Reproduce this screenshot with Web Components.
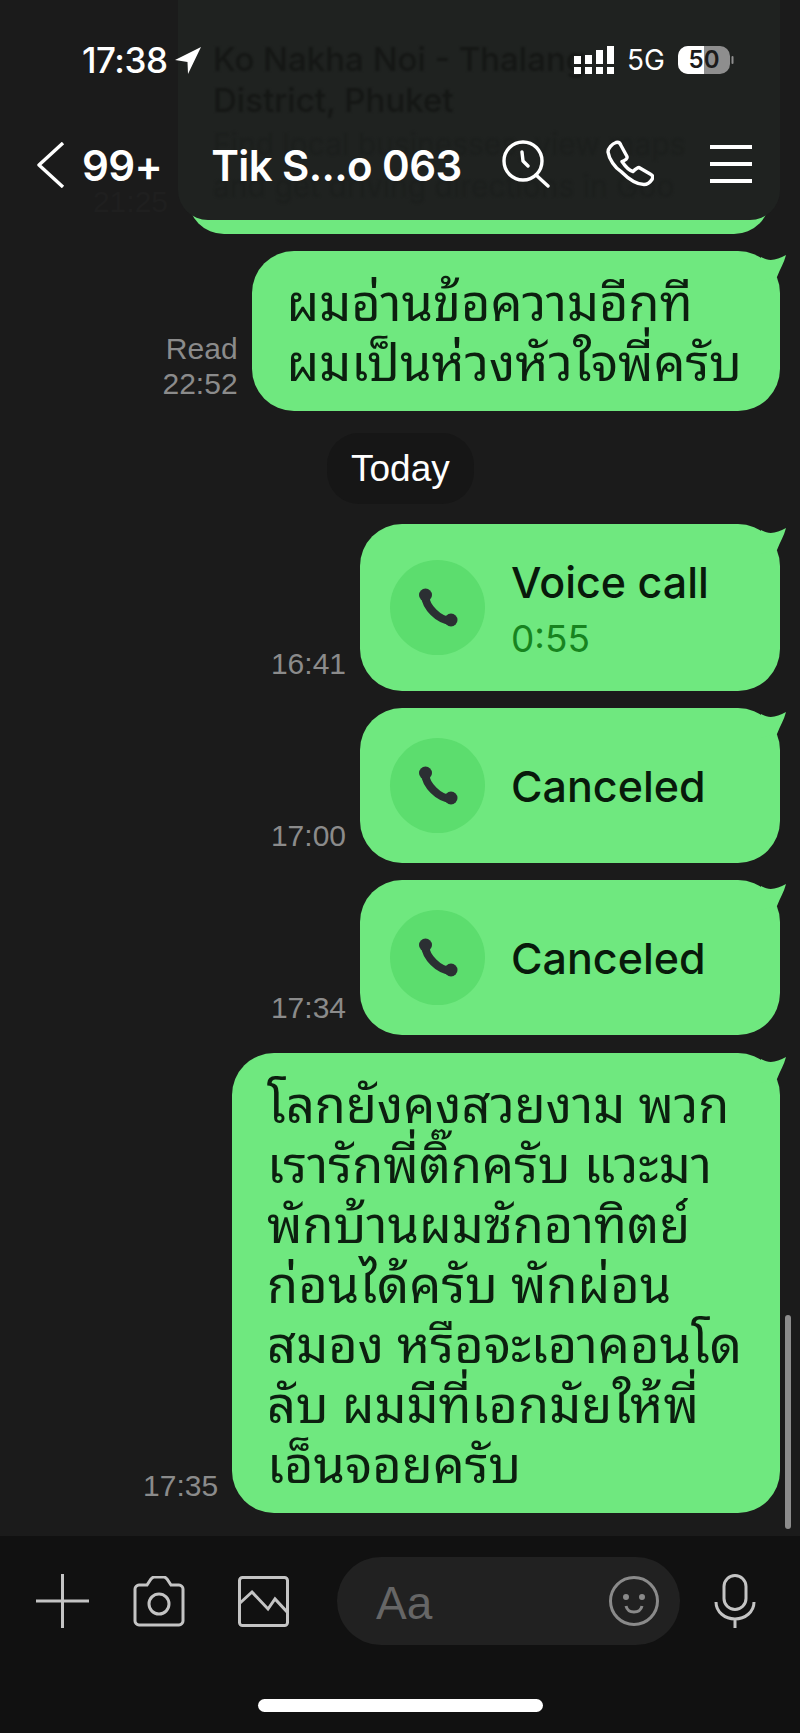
<!DOCTYPE html>
<html>
<head>
<meta charset="utf-8">
<title>Chat</title>
<style>
  html, body { margin: 0; background: #1b1b1b; }
</style>
</head>
<body>
<chat-screen>
  <status-bar slot="overlay"></status-bar>
  <chat-nav slot="overlay" count="99+" name="Tik S...o 063"></chat-nav>

  <msg-row><link-card></link-card><msg-meta slot="meta" style="color:#1f1f1f;padding:0 6px 15px 0">21:25</msg-meta></msg-row>
  <msg-row><text-bubble>ผมอ่านข้อความอีกที<br>ผมเป็นห่วงหัวใจพี่ครับ</text-bubble><msg-meta slot="meta">Read<br>22:52</msg-meta></msg-row>
  <date-pill>Today</date-pill>
  <msg-row><call-bubble title="Voice call" duration="0:55"></call-bubble><msg-meta slot="meta">16:41</msg-meta></msg-row>
  <msg-row><call-bubble title="Canceled"></call-bubble><msg-meta slot="meta">17:00</msg-meta></msg-row>
  <msg-row style="margin-bottom:18px"><call-bubble title="Canceled"></call-bubble><msg-meta slot="meta">17:34</msg-meta></msg-row>
  <msg-row><text-bubble>โลกยังคงสวยงาม พวก<br>เรารักพี่ติ๊กครับ แวะมา<br>พักบ้านผมซักอาทิตย์<br>ก่อนได้ครับ พักผ่อน<br>สมอง หรือจะเอาคอนโด<br>ลับ ผมมีที่เอกมัยให้พี่<br>เอ็นจอยครับ</text-bubble><msg-meta slot="meta">17:35</msg-meta></msg-row>

  <chat-input slot="footer"></chat-input>
</chat-screen>

<script>
const FONT = 'Inter, "Liberation Sans", sans-serif';
const THAI = '"Noto Sans Thai Looped", "Liberation Sans", sans-serif';

/** Page frame: chat column, overlay for the bars, footer for the input */
class ChatScreen extends HTMLElement {
  constructor() {
    super();
    this.attachShadow({ mode: 'open' }).innerHTML = `
      <style>
        :host { display: flex; flex-direction: column; position: relative; width: 800px; height: 1733px; overflow: hidden; background: #1b1b1b; font-family: ${FONT}; }
        .list { flex: 1; display: flex; flex-direction: column; }
        .scroll { position: absolute; left: 785px; top: 1315px; width: 6px; height: 214px; border-radius: 3px; background: #8c8c8c; }
      </style>
      <div class="list"><slot></slot></div>
      <slot name="overlay"></slot>
      <div class="scroll"></div>
      <slot name="footer"></slot>
    `;
  }
}

class StatusBar extends HTMLElement {
  constructor() {
    super();
    this.attachShadow({ mode: 'open' }).innerHTML = `
      <style>
        :host { position: absolute; left: 0; top: 46px; width: 800px; height: 28px; display: flex; align-items: center; color: #fff; }
        .time { margin-left: 82px; font-size: 35px; font-weight: 500; letter-spacing: -.5px; }
        .arrow { margin-left: 8px; }
        .right { margin-left: auto; margin-right: 66px; display: flex; align-items: center; }
        .g { font-size: 28px; font-weight: 400; margin: 0 13px; }
      </style>
      <span class="time">17:38</span>
      <svg class="arrow" width="27" height="27" viewBox="0 0 27 27"><path d="M26 0 0 13l12.500 2 .5 12z" fill="#fff"/></svg>
      <div class="right">
        <svg width="40" height="28" viewBox="0 0 40 28" fill="#fff">
          <rect x="0" y="10" width="7" height="8"/><rect x="0" y="21" width="7" height="7"/>
          <rect x="11" y="9" width="7" height="9"/><rect x="11" y="21" width="7" height="7"/>
          <rect x="22" y="4" width="7" height="14"/><rect x="22" y="21" width="7" height="7"/>
          <rect x="33" y="0" width="7" height="18"/><rect x="33" y="21" width="7" height="7"/>
        </svg>
        <span class="g">5G</span>
        <svg width="56" height="28" viewBox="0 0 56 28">
          <rect x="0" y="0" width="52" height="28" rx="10" fill="#8e8e8e"/>
          <path d="M10 0h16v28H10A10 10 0 0 1 0 18V10A10 10 0 0 1 10 0z" fill="#fff"/>
          <rect x="53.500" y="10" width="2" height="8" rx="1" fill="#8e8e8e"/>
          <text x="26" y="22" text-anchor="middle" font-size="24" font-weight="600" font-family="Inter, sans-serif" fill="#1b1b1b">50</text>
        </svg>
      </div>
    `;
  }
}

class ChatNav extends HTMLElement {
  constructor() {
    super();
    this.attachShadow({ mode: 'open' }).innerHTML = `
      <style>
        :host { position: absolute; left: 0; top: 136px; width: 800px; height: 58px; display: flex; align-items: center; color: #fff; }
        .back { margin-left: 37px; }
        .count { margin-left: 17px; font-size: 42px; font-weight: 600; letter-spacing: -.6px; }
        .name { margin-left: 49px; font-size: 42px; font-weight: 600; letter-spacing: -.6px; white-space: nowrap; }
        .icons { position: absolute; right: 48px; top: 4px; display: flex; align-items: center; }
        svg { display: block; fill: none; stroke: #fff; stroke-width: 3.400; stroke-linecap: round; stroke-linejoin: round; }
      </style>
      <svg class="back" width="28" height="46" viewBox="0 0 28 46"><path d="M26 1 2 23l24 22" stroke-linecap="butt"/></svg>
      <span class="count">${this.getAttribute('count')}</span>
      <span class="name">${this.getAttribute('name')}</span>
      <div class="icons">
        <svg width="48" height="48" viewBox="0 0 48 48"><circle cx="21" cy="21" r="19"/><path d="M20 12l1 9 5 5M34 35l12 11"/></svg>
        <svg style="margin-left:56px" width="48" height="48" viewBox="0 0 48 48"><path d="M2 12C2 8 6 4 10 2.500c2-.5 4 0 5 3l6 11c.5 1.500 0 3-5 5 2 3 7 9 11 10 2-2 4-4 6-4l12 7c2 1 2 3 1 5-2 3-5 5-8 5-8 0-16-6-23-13C9 28 3 19 2 12z"/></svg>
        <svg style="margin-left:56px" width="42" height="40" viewBox="0 0 42 40"><path d="M0 3h42M0 20h42M0 37h42" stroke-width="3.800" stroke-linecap="butt"/></svg>
      </div>
    `;
  }
}

/** Link preview bubble which has scrolled under the nav bar, seen dimmed */
class LinkCard extends HTMLElement {
  constructor() {
    super();
    this.attachShadow({ mode: 'open' }).innerHTML = `
      <style>
        :host { display: block; position: relative; width: 582px; height: 234px; margin-right: 10px; border-radius: 0 0 36px 36px; background: #6fe87f; }
        .veil { position: absolute; left: -10px; right: -10px; top: 0; height: 220px; box-sizing: border-box; padding: 39px 0 0 35px; background: #1f2220; border-radius: 0 0 30px 30px; overflow: hidden; }
        .ghost { color: #151715; font-size: 33px; font-weight: 500; line-height: 41px; white-space: nowrap; filter: blur(1px); }
        .sub { margin-top: 2px; font-size: 30px; font-weight: 400; line-height: 42px; color: #1c1f1d; }
        p { margin: 0; }
      </style>
      <div class="veil">
        <div class="ghost">
          <p>Ko Nakha Noi - Thalang</p>
          <p>District, Phuket</p>
          <p class="sub">Find local businesses, view maps</p>
          <p class="sub" style="margin-top:0">and get driving directions in Goo</p>
        </div>
      </div>
    `;
  }
}

/** Right aligned message row: meta on the left, bubble on the right */
class MsgRow extends HTMLElement {
  constructor() {
    super();
    this.attachShadow({ mode: 'open' }).innerHTML = `
      <style>
        :host { display: flex; justify-content: flex-end; align-items: flex-end; gap: 14px; margin: 0 20px 17px 0; }
        .meta { display: block; order: -1; }
      </style>
      <div class="meta"><slot name="meta"></slot></div>
      <slot></slot>
    `;
  }
}

class MsgMeta extends HTMLElement {
  constructor() {
    super();
    this.attachShadow({ mode: 'open' }).innerHTML = `
      <style>
        :host { display: block; color: #8b8b8b; font-size: 30px; line-height: 35px; text-align: right; font-family: "Liberation Sans", sans-serif; padding-bottom: 10px; }
      </style>
      <slot></slot>
    `;
  }
}

const TAIL = `<svg class="tail" width="26" height="40" viewBox="0 0 26 40"><path d="M0 6c8 5 16 3 25-2-2 8-6 14-9 22L0 30z" fill="#6fe87f"/></svg>`;

class TextBubble extends HTMLElement {
  constructor() {
    super();
    this.attachShadow({ mode: 'open' }).innerHTML = `
      <style>
        :host { display: block; position: relative; box-sizing: border-box; padding: 18px 38px 22px 35px; border-radius: 42px; background: #6fe87f; color: #0c1f0f; font-family: ${THAI}; font-size: 50.500px; line-height: 60px; white-space: nowrap; }
        .tail { position: absolute; right: -7px; top: 0; }
      </style>
      <slot></slot>${TAIL}
    `;
  }
}

class CallBubble extends HTMLElement {
  constructor() {
    super();
    const duration = this.getAttribute('duration');
    this.attachShadow({ mode: 'open' }).innerHTML = `
      <style>
        :host { display: flex; align-items: center; position: relative; box-sizing: border-box; width: 420px; padding: 0 30px; height: ${duration ? 167 : 155}px; border-radius: 42px; background: #6fe87f; color: #081a0b; }
        .tail { position: absolute; right: -7px; top: 0; }
        .circle { width: 95px; height: 95px; flex: none; border-radius: 50%; background: #5cdd6e; display: flex; align-items: center; justify-content: center; margin-right: 26px; }
        .title { font-size: 43px; font-weight: 500; line-height: 50px; }
        .dur { font-size: 37px; color: #17841f; line-height: 40px; margin-top: 12px; }
        svg.phone { display: block; }
      </style>
      <div class="circle">
        <svg class="phone" width="40" height="40" viewBox="0 0 40 40"><path d="M7 8c1 11 13 24 26 25" fill="none" stroke="#2b2f33" stroke-width="8" stroke-linecap="round"/><circle cx="7.500" cy="7" r="6.500" fill="#2b2f33"/><circle cx="33" cy="32" r="6.500" fill="#2b2f33"/></svg>
      </div>
      <div>
        <div class="title">${this.getAttribute('title')}</div>
        ${duration ? `<div class="dur">${duration}</div>` : ''}
      </div>
      ${TAIL}
    `;
  }
}

class DatePill extends HTMLElement {
  constructor() {
    super();
    this.attachShadow({ mode: 'open' }).innerHTML = `
      <style>
        :host { display: block; align-self: flex-start; margin: 5px 0 20px 327px; padding: 0 24px; height: 71px; line-height: 71px; border-radius: 32px; background: #161616; color: #fff; font-size: 37px; font-family: "Liberation Sans", sans-serif; }
      </style>
      <slot></slot>
    `;
  }
}

class ChatInput extends HTMLElement {
  constructor() {
    super();
    this.attachShadow({ mode: 'open' }).innerHTML = `
      <style>
        :host { position: absolute; left: 0; right: 0; bottom: 0; height: 197px; background: #111; display: block; }
        .row { display: flex; align-items: center; height: 88px; margin-top: 21px; padding-left: 36px; }
        svg { display: block; fill: none; stroke: #c4c4c4; stroke-width: 3; flex: none; }
        .pill { margin-left: 48px; width: 343px; height: 88px; box-sizing: border-box; border-radius: 44px; background: #212121; display: flex; align-items: center; padding: 3px 21px 0 39px; color: #666; font-size: 46px; font-family: "Liberation Sans", sans-serif; justify-content: space-between; }
        .pill svg { stroke: #8a8a8a; margin-top: -3px; }
        .home { position: absolute; left: 258px; top: 163px; width: 285px; height: 13px; border-radius: 7px; background: #fff; }
      </style>
      <div class="row">
        <svg width="53" height="54" viewBox="0 0 53 54"><path d="M0 27h53M26.500 0v54"/></svg>
        <svg style="margin-left:44px" width="52" height="51" viewBox="0 0 52 51"><path d="M6 9h8l4-6c1-1 2-2 3-2h10c1 0 2 1 3 2l4 6h8c2 0 4 2 4 4v32c0 2-2 4-4 4H6c-2 0-4-2-4-4V13c0-2 2-4 4-4z"/><circle cx="26" cy="28" r="10"/></svg>
        <svg style="margin-left:53px" width="51" height="51" viewBox="0 0 51 51"><rect x="1.500" y="1.500" width="48" height="48" rx="3"/><path d="M2 27 14 16l16 17 7-10 13 14"/></svg>
        <div class="pill"><span>Aa</span>
          <svg width="50" height="50" viewBox="0 0 50 50"><circle cx="25" cy="25" r="23.500"/><path d="M17 30c2 8 14 8 16 0"/><circle cx="17" cy="21" r="1.500"/><circle cx="33" cy="21" r="1.500"/></svg>
        </div>
        <svg style="margin-left:34px" width="42" height="54" viewBox="0 0 42 54"><rect x="10" y="1.500" width="22" height="34" rx="11"/><path d="M2 28c0 10 9 17 19 17s19-7 19-17M21 45v9"/></svg>
      </div>
      <div class="home"></div>
    `;
  }
}

customElements.define('chat-screen', ChatScreen);
customElements.define('status-bar', StatusBar);
customElements.define('chat-nav', ChatNav);
customElements.define('link-card', LinkCard);
customElements.define('msg-row', MsgRow);
customElements.define('msg-meta', MsgMeta);
customElements.define('text-bubble', TextBubble);
customElements.define('call-bubble', CallBubble);
customElements.define('date-pill', DatePill);
customElements.define('chat-input', ChatInput);
</script>
</body>
</html>
